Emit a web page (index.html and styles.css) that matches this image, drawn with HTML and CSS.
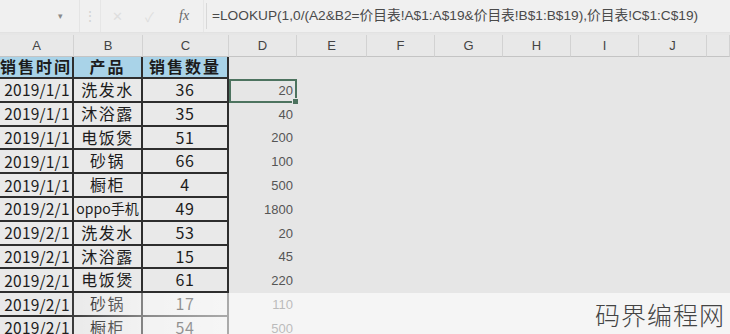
FILE: index.html
```html
<!DOCTYPE html>
<html lang="zh-CN">
<head>
    <meta charset="UTF-8">
    <meta name="viewport" content="width=device-width, initial-scale=1.0">
    <title>LOOKUP 多条件查找</title>
    <link rel="stylesheet" href="styles.css">
</head>
<body>
    <div class="screen">
        <div class="formula-bar">
            <div class="name-box"><span class="arrow">&#9662;</span></div>
            <div class="dots">&#8942;</div>
            <div class="tools">
                <span class="tool">&#10005;</span>
                <span class="tool">&#10003;</span>
                <span class="fx">fx</span>
            </div>
            <div class="formula">=LOOKUP(1,0/(A2&amp;B2=价目表!A$1:A$19&amp;价目表!B$1:B$19),价目表!C$1:C$19)</div>
        </div>

        <div class="sheet">
            <div class="col-head">A</div>
            <div class="col-head">B</div>
            <div class="col-head">C</div>
            <div class="col-head">D</div>
            <div class="col-head">E</div>
            <div class="col-head">F</div>
            <div class="col-head">G</div>
            <div class="col-head">H</div>
            <div class="col-head">I</div>
            <div class="col-head">J</div>
            <div class="col-head"></div>

            <div class="cell head">销售时间</div>
            <div class="cell head">产品</div>
            <div class="cell head">销售数量</div>
            <div class="cell empty span-head"></div>

            <div class="cell date">2019/1/1</div><div class="cell">洗发水</div><div class="cell num">36</div><div class="cell price selected">20</div><div class="cell empty span-rest"></div>
            <div class="cell date">2019/1/1</div><div class="cell">沐浴露</div><div class="cell num">35</div><div class="cell price">40</div><div class="cell empty span-rest"></div>
            <div class="cell date">2019/1/1</div><div class="cell">电饭煲</div><div class="cell num">51</div><div class="cell price">200</div><div class="cell empty span-rest"></div>
            <div class="cell date">2019/1/1</div><div class="cell">砂锅</div><div class="cell num">66</div><div class="cell price">100</div><div class="cell empty span-rest"></div>
            <div class="cell date">2019/1/1</div><div class="cell">橱柜</div><div class="cell num">4</div><div class="cell price">500</div><div class="cell empty span-rest"></div>
            <div class="cell date">2019/2/1</div><div class="cell small">oppo手机</div><div class="cell num">49</div><div class="cell price">1800</div><div class="cell empty span-rest"></div>
            <div class="cell date">2019/2/1</div><div class="cell">洗发水</div><div class="cell num">53</div><div class="cell price">20</div><div class="cell empty span-rest"></div>
            <div class="cell date">2019/2/1</div><div class="cell">沐浴露</div><div class="cell num">15</div><div class="cell price">45</div><div class="cell empty span-rest"></div>
            <div class="cell date">2019/2/1</div><div class="cell">电饭煲</div><div class="cell num">61</div><div class="cell price">220</div><div class="cell empty span-rest"></div>
            <div class="cell date">2019/2/1</div><div class="cell">砂锅</div><div class="cell num">17</div><div class="cell price">110</div><div class="cell empty span-rest"></div>
            <div class="cell date">2019/2/1</div><div class="cell">橱柜</div><div class="cell num">54</div><div class="cell price">500</div><div class="cell empty span-rest"></div>
        </div>

        <div class="fade"></div>
        <div class="watermark">码界编程网</div>
    </div>
</body>
</html>
```

FILE: styles.css
```css
body {
    margin: 0;
    font-family: "Liberation Sans", Arial, sans-serif;
    background-color: #e6e6e6;
}

.screen {
    position: relative;
    width: 730px;
    height: 334px;
    overflow: hidden;
    background-color: #e6e6e6;
}

/* formula bar */
.formula-bar {
    display: flex;
    align-items: center;
    height: 32px;
    background-color: #f0f0f0;
    border-bottom: 1px solid #e2e2e2;
    color: #555;
}

.name-box {
    width: 80px;
    height: 32px;
    display: flex;
    align-items: center;
    justify-content: flex-end;
    border-right: 1px solid #e4e4e4;
    box-sizing: border-box;
}

.name-box .arrow {
    font-size: 9px;
    color: #8a8a8a;
    margin-right: 16px;
}

.dots {
    width: 20px;
    text-align: center;
    color: #d4d4d4;
    font-size: 14px;
}

.tools {
    display: flex;
    align-items: center;
    width: 104px;
    height: 32px;
    border-left: 1px solid #e6e6e6;
    border-right: 1px solid #e6e6e6;
    box-sizing: border-box;
}

.tool {
    width: 32px;
    text-align: center;
    color: #dedede;
    font-size: 13px;
}

.fx {
    margin-left: 14px;
    font-family: "Liberation Serif", serif;
    font-style: italic;
    font-size: 14px;
    color: #666;
}

.formula {
    flex: 1;
    height: 26px;
    line-height: 26px;
    margin-left: 2px;
    padding-left: 5px;
    border-left: 1px solid #d8d8d8;
    font-size: 13.7px;
    color: #4a4a4a;
    white-space: nowrap;
    font-family: "Liberation Sans", "Noto Sans CJK SC", sans-serif;
}

/* sheet grid */
.sheet {
    display: grid;
    grid-template-columns: 74px 69px 86px 68px 70px 68px 68px 68px 68px 68px 1fr;
    grid-auto-rows: 23.8px;
    grid-template-rows: 22px 22px;
    margin-top: 2px;
}

.col-head {
    display: flex;
    align-items: center;
    justify-content: center;
    background-color: #e8e8e8;
    border-right: 1px solid #d2d2d2;
    border-bottom: 1px solid #c4c4c4;
    font-size: 13px;
    color: #444;
}

.cell {
    display: flex;
    align-items: center;
    justify-content: center;
    background-color: #e9e9e9;
    border-right: 2px solid #2e2e2e;
    border-bottom: 2px solid #2e2e2e;
    box-sizing: border-box;
    font-family: "Noto Sans CJK SC", sans-serif;
    font-size: 16px;
    line-height: 1.1;
    letter-spacing: 1.5px;
    color: #1c1c1c;
    white-space: nowrap;
}

.cell.head {
    background-color: #a9d3e8;
    font-weight: bold;
    letter-spacing: 2px;
}

.cell.date {
    font-size: 15.5px;
    letter-spacing: 0.2px;
    padding-left: 2px;
}

.cell.small {
    font-size: 14px;
    letter-spacing: 0;
}

.cell.num {
    letter-spacing: 0.5px;
}

.cell.price {
    justify-content: flex-end;
    padding-right: 4px;
    background-color: transparent;
    border: none;
    font-family: "Liberation Sans", sans-serif;
    font-size: 13px;
    letter-spacing: 0;
    color: #555;
}

.cell.price.selected {
    position: relative;
    border: 2px solid #4d735f;
    padding-right: 2px;
}

.cell.price.selected::after {
    content: "";
    position: absolute;
    right: -4px;
    bottom: -4px;
    width: 5px;
    height: 5px;
    background-color: #4d735f;
    border: 1px solid #e6e6e6;
}

.cell.empty {
    background-color: transparent;
    border: none;
}

.span-rest {
    grid-column: 5 / -1;
}

.span-head {
    grid-column: 4 / -1;
}

/* light caption strip at the bottom of the frame */
.fade {
    position: absolute;
    left: 0;
    right: 0;
    top: 293px;
    bottom: 0;
    background: linear-gradient(to right, rgba(255,255,255,0) 60px, rgba(255,255,255,0.45) 150px, rgba(255,255,255,0.6) 230px, rgba(255,255,255,0.6) 100%);
}

.watermark {
    position: absolute;
    right: 5px;
    top: 299px;
    font-family: "Noto Sans CJK SC", sans-serif;
    font-weight: 300;
    font-size: 25px;
    letter-spacing: 1px;
    line-height: 1.2;
    color: #444;
}
```
